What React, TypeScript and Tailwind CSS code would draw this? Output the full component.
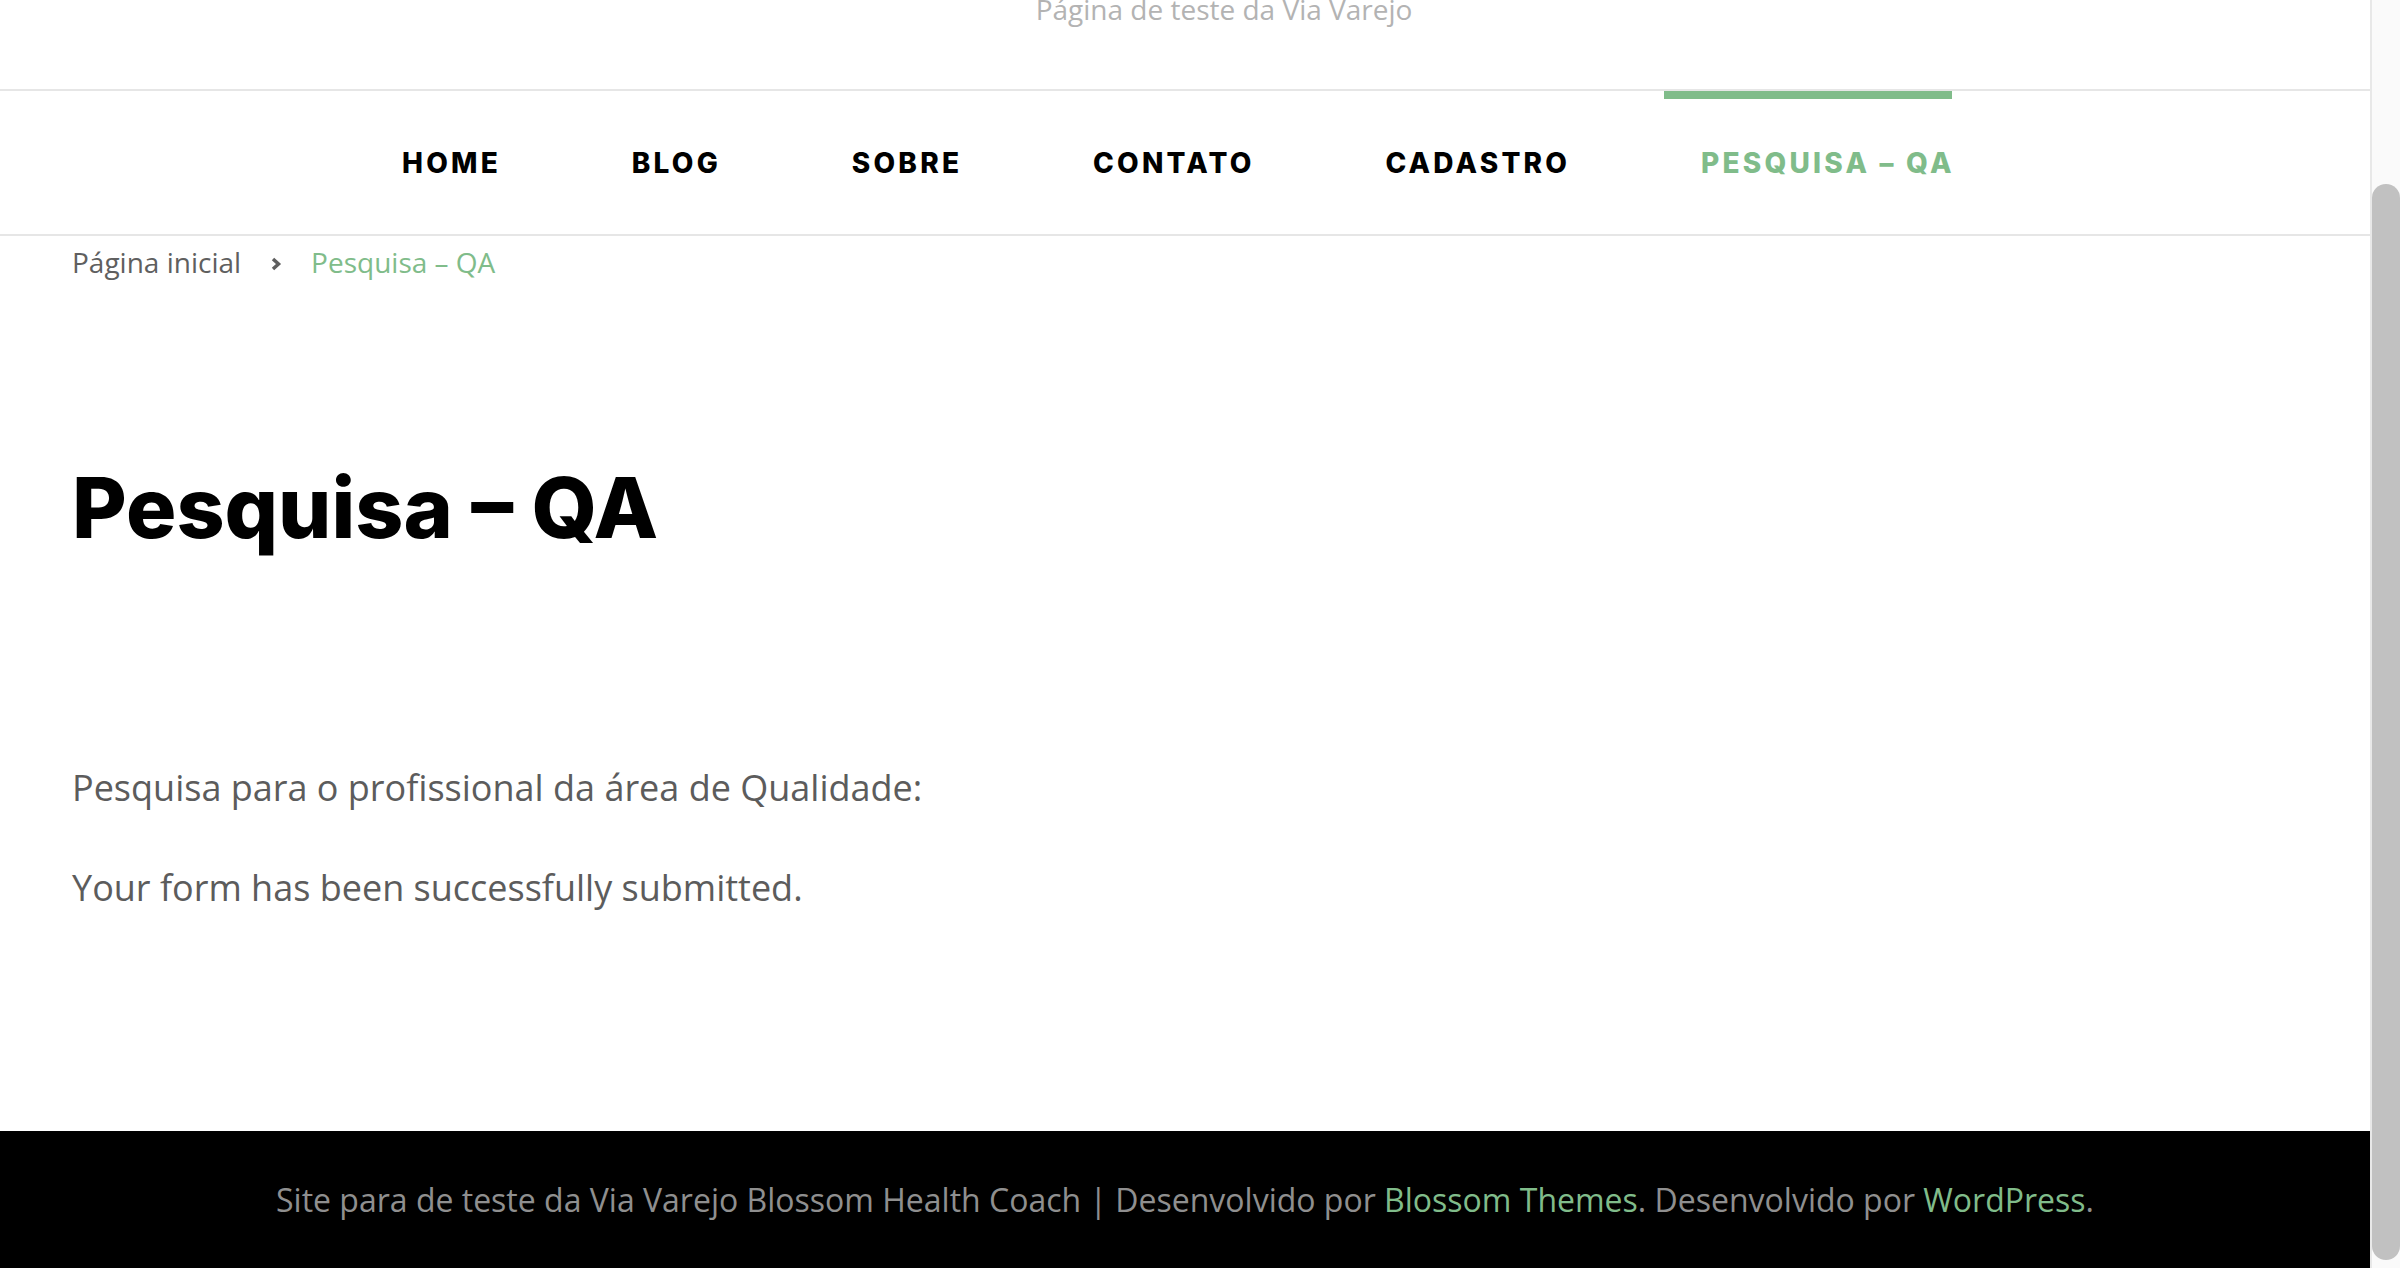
import React from "react";

const navItems = ["Home", "Blog", "Sobre", "Contato", "Cadastro", "Pesquisa – QA"];

function Scrollbar() {
  return (
    <div className="flex w-[30px] shrink-0 justify-center border-l-2 border-[#e8e8e8] bg-[#fafafa] pt-[184px] pb-[8px]">
      <div className="w-[16px] flex-1 rounded-full bg-[#c1c1c1]" />
    </div>
  );
}

function NavBar() {
  return (
    <nav className="h-[147px] border-y-2 border-[#e6e6e6]">
      <ul className="flex h-full items-stretch gap-[134px] pl-[402px] font-['Inter',sans-serif] text-[28px] font-extrabold tracking-[0.115em] uppercase">
        {navItems.map((item, i) => {
          const active = i === navItems.length - 1;
          return (
            <li
              key={item}
              className={
                active
                  ? "relative flex items-center text-[#80bc8a]"
                  : "relative flex items-center text-black"
              }
            >
              {active && (
                <span className="absolute top-0 -left-[37px] right-0 h-[8px] bg-[#80bc8a]" />
              )}
              <a href="#" className="-mr-[0.115em]">
                {item}
              </a>
            </li>
          );
        })}
      </ul>
    </nav>
  );
}

export default function App() {
  return (
    <div className="flex h-[1268px] w-full overflow-hidden bg-white font-['Open_Sans',sans-serif]">
      <div className="flex min-w-0 flex-1 flex-col">
        <header className="h-[89px] overflow-hidden pl-[78px] text-center">
          <p className="-mt-[9px] text-[28px] leading-[36px] text-[#b3b3b3]">
            Página de teste da Via Varejo
          </p>
        </header>
        <NavBar />

        <main className="flex-1 px-[72px]">
          <div className="flex h-[52px] items-center text-[28px] text-[#5f5f5f]">
            <a href="#">Página inicial</a>
            <svg
              xmlns="http://www.w3.org/2000/svg"
              width="12"
              height="16"
              viewBox="0 0 12 16"
              className="mx-[29px] mt-[4px]"
            >
              <path
                d="M3 3 L8.5 8 L3 13"
                fill="none"
                stroke="#5f5f5f"
                strokeWidth="3.5"
              />
            </svg>
            <span className="text-[#80bc8a]">Pesquisa – QA</span>
          </div>

          <h1 className="mt-[170px] font-['Inter',sans-serif] text-[84px] leading-[100px] font-extrabold text-black">
            Pesquisa – QA
          </h1>

          <div className="mt-[203px] text-[36px] leading-[54px] text-[#5c5c5c]">
            <p>Pesquisa para o profissional da área de Qualidade:</p>
            <p className="mt-[46px]">Your form has been successfully submitted.</p>
          </div>
        </main>

        <footer className="flex h-[137px] items-center justify-center bg-black text-[32px] text-[#8f8f8f]">
          <p>
            Site para de teste da Via Varejo Blossom Health Coach | Desenvolvido por{" "}
            <a href="#" className="text-[#80bc8a]">
              Blossom Themes
            </a>
            . Desenvolvido por{" "}
            <a href="#" className="text-[#80bc8a]">
              WordPress
            </a>
            .
          </p>
        </footer>
      </div>
      <Scrollbar />
    </div>
  );
}
